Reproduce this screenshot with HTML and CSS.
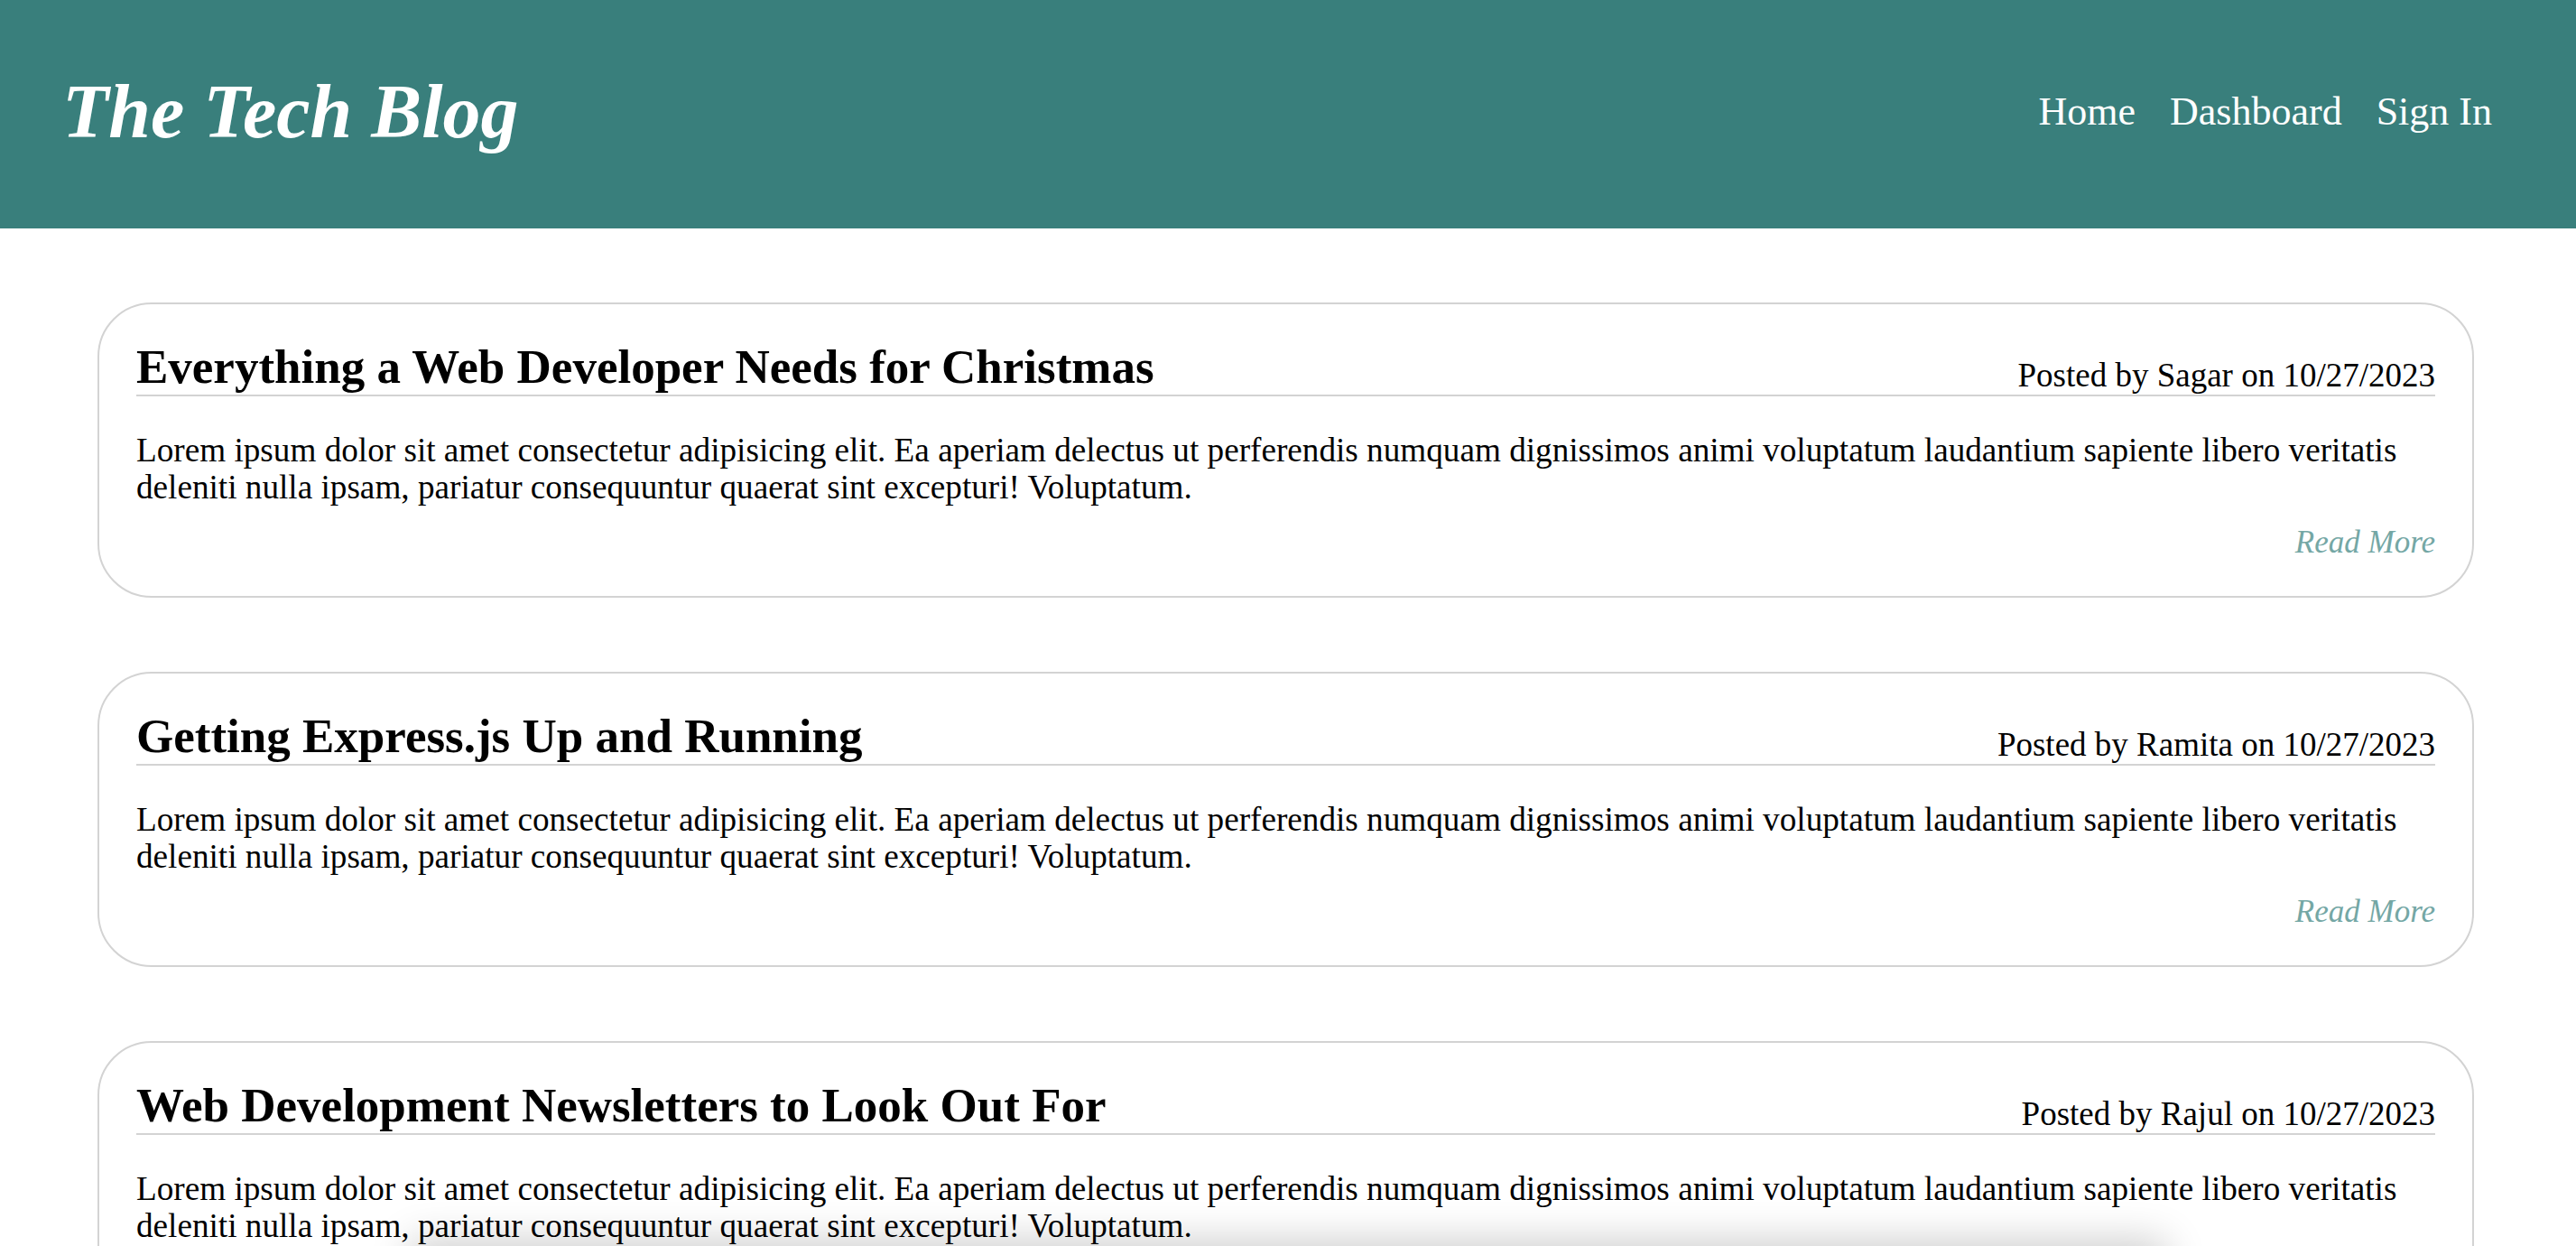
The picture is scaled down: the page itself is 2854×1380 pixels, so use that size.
FILE: index.html
```html
<!DOCTYPE html>
<html lang="en">
<head>
<meta charset="utf-8">
<title>The Tech Blog</title>
<link rel="stylesheet" href="styles.css">
</head>
<body>
<header class="site-header">
  <h1 class="brand">The Tech Blog</h1>
  <nav class="nav">
    <a class="nav-link" href="#">Home</a>
    <a class="nav-link" href="#">Dashboard</a>
    <a class="nav-link" href="#">Sign In</a>
  </nav>
</header>
<main class="posts">
  <article class="post">
    <div class="post-head">
      <h2 class="post-title">Everything a Web Developer Needs for Christmas</h2>
      <span class="post-meta">Posted by Sagar on 10/27/2023</span>
    </div>
    <p class="post-body">Lorem ipsum dolor sit amet consectetur adipisicing elit. Ea aperiam delectus ut perferendis numquam dignissimos animi voluptatum laudantium sapiente libero veritatis deleniti nulla ipsam, pariatur consequuntur quaerat sint excepturi! Voluptatum.</p>
    <div class="post-foot"><a class="read-more" href="#">Read More</a></div>
  </article>
  <article class="post">
    <div class="post-head">
      <h2 class="post-title">Getting Express.js Up and Running</h2>
      <span class="post-meta">Posted by Ramita on 10/27/2023</span>
    </div>
    <p class="post-body">Lorem ipsum dolor sit amet consectetur adipisicing elit. Ea aperiam delectus ut perferendis numquam dignissimos animi voluptatum laudantium sapiente libero veritatis deleniti nulla ipsam, pariatur consequuntur quaerat sint excepturi! Voluptatum.</p>
    <div class="post-foot"><a class="read-more" href="#">Read More</a></div>
  </article>
  <article class="post">
    <div class="post-head">
      <h2 class="post-title">Web Development Newsletters to Look Out For</h2>
      <span class="post-meta">Posted by Rajul on 10/27/2023</span>
    </div>
    <p class="post-body">Lorem ipsum dolor sit amet consectetur adipisicing elit. Ea aperiam delectus ut perferendis numquam dignissimos animi voluptatum laudantium sapiente libero veritatis deleniti nulla ipsam, pariatur consequuntur quaerat sint excepturi! Voluptatum.</p>
    <div class="post-foot"><a class="read-more" href="#">Read More</a></div>
  </article>
</main>
<footer class="site-footer"></footer>
</body>
</html>
```

FILE: styles.css
```css
* { box-sizing: border-box; }

html, body {
  margin: 0;
  padding: 0;
  background: #ffffff;
  color: #000000;
  font-family: "Liberation Serif", "Times New Roman", serif;
}

.site-header {
  display: flex;
  align-items: center;
  justify-content: space-between;
  height: 253px;
  padding: 0 93px 5px 69px;
  background: #397f7c;
  color: #ffffff;
}

.brand {
  margin: 0;
  font-size: 84px;
  font-weight: 700;
  font-style: italic;
  line-height: 1.15;
}

.nav {
  display: flex;
  gap: 38px;
}

.nav-link {
  color: #ffffff;
  text-decoration: none;
  font-size: 44px;
  line-height: 1.15;
}

.posts {
  display: flex;
  flex-direction: column;
  gap: 82px;
  padding: 82px 113px 82px 108px;
}

.post {
  border: 2px solid #d3d3d3;
  border-radius: 60px;
  padding: 39px 41px 39px 41px;
  background: #ffffff;
}

.post-head {
  display: flex;
  justify-content: space-between;
  align-items: flex-end;
  border-bottom: 2px solid #d3d3d3;
}

.post-title {
  margin: 0;
  font-size: 53px;
  font-weight: 700;
  line-height: 61px;
}

.post-meta {
  font-size: 37px;
  line-height: 42px;
}

.post-body {
  margin: 39px 0 0 0;
  font-size: 37.2px;
  line-height: 41px;
}

.post-foot {
  display: flex;
  justify-content: flex-end;
  margin-top: 20px;
}

.read-more {
  color: #74a7a5;
  font-style: italic;
  font-size: 35px;
  line-height: 41px;
  text-decoration: none;
}

.site-footer {
  position: fixed;
  left: 460px;
  right: 460px;
  bottom: -50px;
  height: 50px;
  background: #ffffff;
  box-shadow: 0 0 45px 6px rgba(0, 0, 0, 0.2);
}
```
